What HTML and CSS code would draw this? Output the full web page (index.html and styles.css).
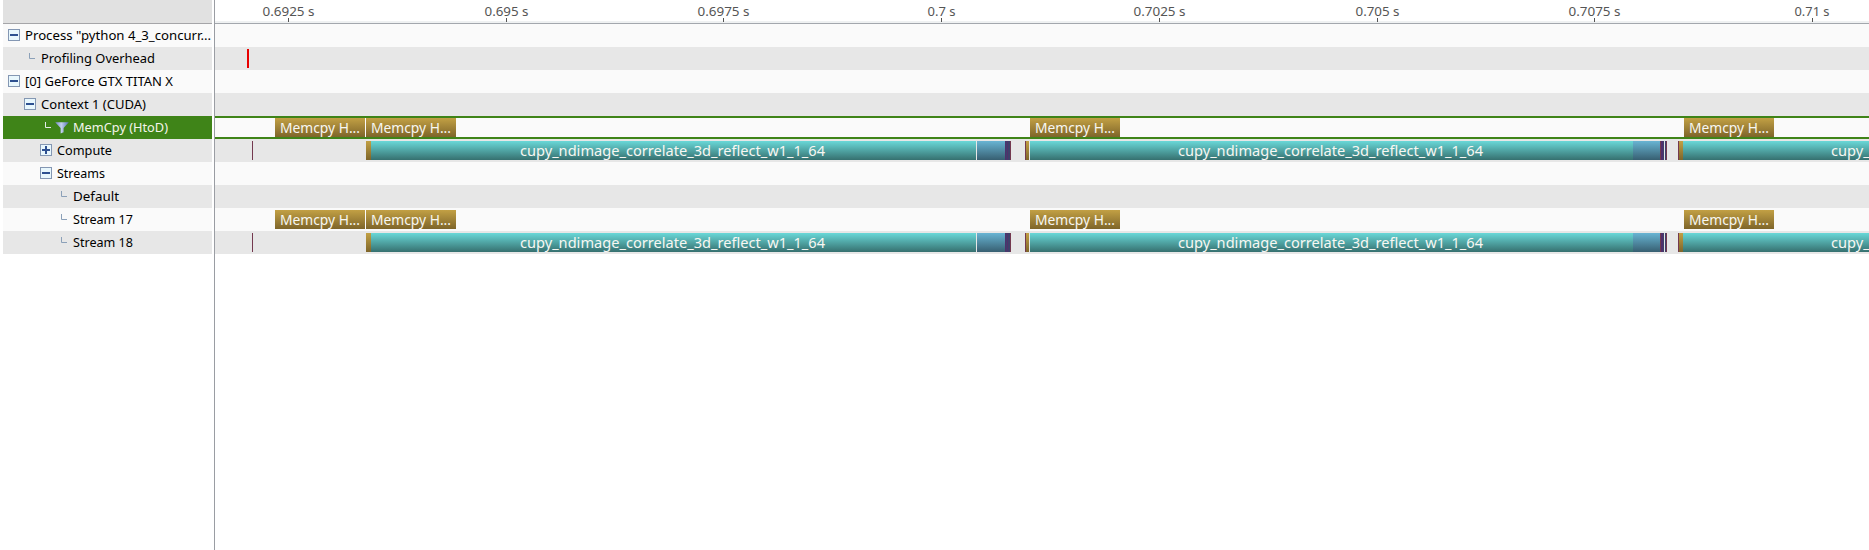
FILE: index.html
```
<!DOCTYPE html>
<html lang="en">
<head>
<meta charset="utf-8">
<title>Timeline</title>
<link rel="stylesheet" href="styles.css">
</head>
<body>
<div class="profiler">
  <div class="tree" id="tree"></div>
  <div class="timeline">
    <div class="ruler" id="ruler"></div>
    <div class="tracks" id="tracks"></div>
  </div>
</div>
<script src="app.js"></script>
</body>
</html>
```

FILE: styles.css
```
body { margin: 0; background: #fff; overflow: hidden; }
.profiler {
  display: grid;
  grid-template-columns: 209px 1fr;
  height: 550px;
  padding-left: 3px;
  font-family: "Noto Sans", sans-serif;
  font-size: 13px;
  color: #000;
}
.tree-head { height: 23px; background: #e1e1e1; border-bottom: 1px solid #a5a5a8; }
.tree-row {
  display: flex;
  align-items: center;
  height: 23px;
  background: #fafafa;
  white-space: nowrap;
}
.tree-row.odd, .track.odd { background: #e7e7e7; }
.tree-row.selected { background: #3f8418; color: #f4f4ec; }
.tree-row svg { flex: none; display: block; }
.branch { color: #8ba0b8; }
.selected .branch { color: #e3ecea; }
.level-0 { padding-left: 5px; }
.level-1 { padding-left: 21px; }
.level-2 { padding-left: 37px; }
.level-3 { padding-left: 53px; }
.toggle { margin-right: 5px; }
.elbow { margin: 0 6px 0 5px; }
.funnel { margin-right: 4px; margin-left: -2px; }
.text { overflow: visible; display: block; }
.timeline {
  min-width: 0;
  margin-left: 2px;
  border-left: 1px solid #9a9da3;
  overflow: hidden;
}
.ruler {
  position: relative;
  height: 23px;
  background: linear-gradient(#fff 21px, #eff1f2 21px);
  border-bottom: 1px solid #a3a7ad;
}
.tick {
  position: absolute;
  top: 0;
  display: flex;
  justify-content: center;
  height: 22px;
  width: 81px;
  margin-left: -40px;
  color: #555;
}
.tick::after { content: ""; position: absolute; left: 40px; top: 18px; width: 1px; height: 4px; background: #555; }
.track { position: relative; height: 23px; background: #fafafa; overflow: hidden; }
.track.selected { box-sizing: border-box; border: solid #3f8418; border-width: 2px 0; }
.bar {
  position: absolute;
  top: 2px;
  display: flex;
  justify-content: center;
  height: 19px;
  color: #f7f7f2;
}
.track.selected .bar { top: 0; }
.gold { background: linear-gradient(#c2a044, #7e652a); }
.teal { background: linear-gradient(#69d8d8, #36706f); }
.blue { background: linear-gradient(#68b4d3, #375f71); }
.maroon { background: #74394f; }
.purple { background: #50306c; }
.navy { background: #3d416b; }
.red { background: #e80000; }
```

FILE: app.js
```
const ORIGIN = 215;
const icons = {
  minus: '<svg class="toggle" width="12" height="13"><rect x=".5" y=".5" width="11" height="11" fill="#e8f7fd" stroke="#8497b3"/><path d="M2 6H10" stroke="#2d5090" stroke-width="2"/></svg>',
  plus: '<svg class="toggle" width="12" height="13"><rect x=".5" y=".5" width="11" height="11" fill="#e8f7fd" stroke="#8497b3"/><path d="M2 6H10M6 2V10" stroke="#2d5090" stroke-width="2"/></svg>',
  elbow: '<svg class="elbow" width="6" height="13"><path d="M.5 1V6.5H6" fill="none" stroke="currentColor"/></svg>',
  funnel: '<svg class="funnel" width="14" height="13"><defs><linearGradient id="f"><stop stop-color="#7387c5"/><stop offset=".45" stop-color="#c3d1ed"/><stop offset="1" stop-color="#5470b6"/></linearGradient></defs><path d="M.2 1.2H13.8L8.6 7V11.3L5.6 12.6V7Z" fill="url(#f)"/></svg>'
};
const rows = [
  [0, 'minus', 'Process "python 4_3_concurr...', 186],
  [1, 'elbow', 'Profiling Overhead', 114],
  [0, 'minus', '[0] GeForce GTX TITAN X', 148],
  [1, 'minus', 'Context 1 (CUDA)', 105],
  [2, 'elbow', 'MemCpy (HtoD)', 95],
  [2, 'plus', 'Compute', 55],
  [2, 'minus', 'Streams', 48],
  [3, 'elbow', 'Default', 46],
  [3, 'elbow', 'Stream 17', 60],
  [3, 'elbow', 'Stream 18', 60]
];
const kernel = 'cupy_ndimage_correlate_3d_reflect_w1_1_64';
const copies = [275, 366, 1030, 1684].map(x => [x, 90, 'gold', 'Memcpy H...', 80]);
const kernels = [
  [252, 1, 'maroon'], [366, 5, 'gold'], [371, 605, 'teal', kernel, 305],
  [977, 28, 'blue'], [1005, 1, 'purple'], [1006, 1, 'navy'], [1007, 1, 'purple'],
  [1008, 2, 'navy'], [1010, 1, 'maroon'],
  [1025, 1, 'maroon'], [1026, 3, 'gold'], [1030, 603, 'teal', kernel, 305],
  [1633, 27, 'blue'], [1660, 1, 'maroon'], [1661, 2, 'purple'], [1663, 1, 'navy'],
  [1665, 1, 'navy'], [1666, 1, 'maroon'],
  [1678, 1, 'maroon'], [1679, 4, 'gold'], [1683, 602, 'teal', kernel, 305]
];
const tracks = [[], [[247, 2, 'red']], [], [], copies, kernels, [], [], copies, kernels];

// Text fitted to a given width.
const fit = (text, width, size, height, x, y) =>
  `<svg class="text" width="${width}" height="${height}"><text x="${x}" y="${y}" font-size="${size}" textLength="${width}" lengthAdjust="spacingAndGlyphs" fill="currentColor">${text}</text></svg>`;

document.getElementById('tree').innerHTML = '<div class="tree-head"></div>' + rows.map(([level, icon, text, w], i) =>
  `<div class="tree-row level-${level}${i % 2 ? ' odd' : ''}${i === 4 ? ' selected' : ''}">` +
  `<span class="branch">${icons[icon]}</span>` +
  `${i === 4 ? icons.funnel : ''}${fit(text, w, 13, 23, 0, 16)}</div>`).join('');

document.getElementById('ruler').innerHTML =
  [['0.6925 s', 288, 52], ['0.695 s', 506, 44], ['0.6975 s', 723, 52], ['0.7 s', 941, 28], ['0.7025 s', 1159, 52], ['0.705 s', 1377, 44], ['0.7075 s', 1594, 52], ['0.71 s', 1812, 35]]
    .map(([t, x, w]) => `<div class="tick" style="left:${x - ORIGIN}px">${fit(t, w, 13, 22, -0.5, 16)}</div>`).join('');

document.getElementById('tracks').innerHTML = tracks.map((bars, i) =>
  `<div class="track${i % 2 ? ' odd' : ''}${i === 4 ? ' selected' : ''}">` +
  bars.map(([x, w, color, text, tw]) =>
    `<div class="bar ${color}" style="left:${x - ORIGIN}px;width:${w}px">${text ? fit(text, tw, 14.5, 19, text === kernel ? -1 : 0, 14.5) : ''}</div>`).join('') +
  '</div>').join('');
```
